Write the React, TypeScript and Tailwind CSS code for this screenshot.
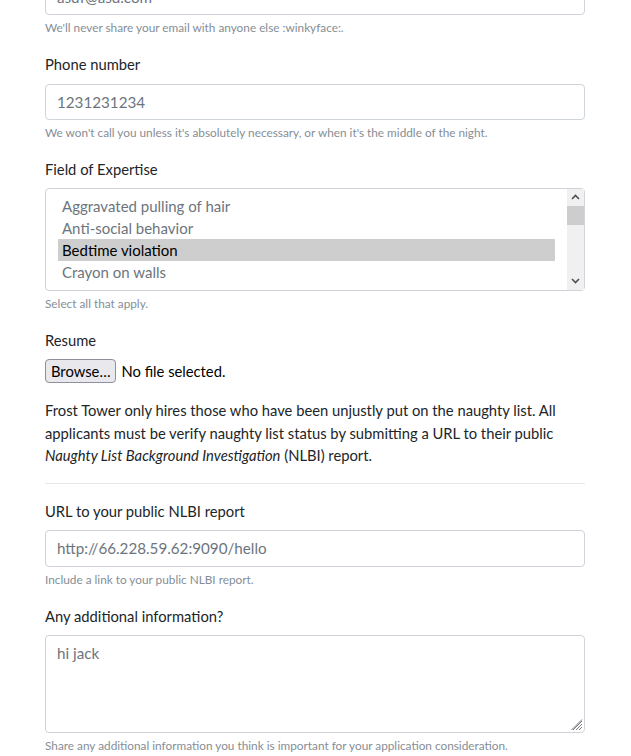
import React from "react";

function Label({ children }: { children: React.ReactNode }) {
    return <label className="block mb-2 text-[14.75px] leading-[22.5px] text-[#212529]">{children}</label>;
}

function Help({ children }: { children: React.ReactNode }) {
    return <small className="block mt-1 text-[11.8px] leading-[18px] text-[#868e96]">{children}</small>;
}

function TextInput({ value }: { value: string }) {
    return (
        <div className="h-[36.5px] border border-[#ced4da] rounded-[4px] px-[11px] py-[6px] text-[15.2px] leading-[22.5px] text-[#6c757d] bg-white">
            {value}
        </div>
    );
}

const options = [
    "Aggravated pulling of hair",
    "Anti-social behavior",
    "Bedtime violation",
    "Crayon on walls",
];

function Chevron({ up }: { up?: boolean }) {
    return (
        <svg width="9" height="6" viewBox="0 0 9 6" className={up ? "" : "rotate-180"}>
            <path d="M1 5 L4.5 1.5 L8 5" fill="none" stroke="#505050" strokeWidth="1.6" />
        </svg>
    );
}

export default function App() {
    return (
        <div className="w-[631px] h-[756px] overflow-hidden bg-white font-['Lato','Liberation_Sans',sans-serif]">
            <div className="ml-[45px] w-[540px] -mt-[21.5px]">
                <div className="mb-4">
                    <TextInput value="asdf@asd.com" />
                    <Help>We'll never share your email with anyone else :winkyface:.</Help>
                </div>

                <div className="mb-4">
                    <Label>Phone number</Label>
                    <TextInput value="1231231234" />
                    <Help>We won't call you unless it's absolutely necessary, or when it's the middle of the night.</Help>
                </div>

                <div className="mb-4">
                    <Label>Field of Expertise</Label>
                    <div className="relative h-[103px] -mt-[1px] border border-[#ced4da] rounded-[4px] bg-white flex">
                        <div className="flex-1 pl-[12px] pr-[12px] pt-[6px]">
                            {options.map((o, i) => (
                                <div
                                    key={o}
                                    className={
                                        "h-[22px] leading-[22px] px-[4px] text-[15px] " +
                                        (i === 2 ? "bg-[#cecece] text-black" : "text-[#6c757d]")
                                    }
                                >
                                    {o}
                                </div>
                            ))}
                        </div>
                        <div className="w-[17px] bg-[#f0f0f0] flex flex-col items-center">
                            <div className="h-[17px] flex items-center justify-center"><Chevron up /></div>
                            <div className="w-full h-[19px] bg-[#cdcdcd]" />
                            <div className="flex-1" />
                            <div className="h-[17px] flex items-center justify-center"><Chevron /></div>
                        </div>
                    </div>
                    <Help>Select all that apply.</Help>
                </div>

                <div className="mb-4">
                    <Label>Resume</Label>
                    <div className="flex items-center text-[14.75px]">
                        <span className="h-[24px] px-[5px] leading-[22px] border border-[#8f8f9d] rounded-[4px] bg-[#e9e9ed] text-black">
                            Browse…
                        </span>
                        <span className="ml-[5px] text-black">No file selected.</span>
                    </div>
                </div>

                <p className="text-[14.75px] leading-[22.5px] text-[#212529]">
                    Frost Tower only hires those who have been unjustly put on the naughty list. All applicants must be verify
                    naughty list status by submitting a URL to their public <em>Naughty List Background Investigation</em> (NLBI)
                    report.
                </p>
                <hr className="my-4 border-t border-[#e6e6e6]" />

                <div className="mb-4">
                    <Label>URL to your public NLBI report</Label>
                    <TextInput value="http://66.228.59.62:9090/hello" />
                    <Help>Include a link to your public NLBI report.</Help>
                </div>

                <div className="mb-4">
                    <Label>Any additional information?</Label>
                    <div className="relative h-[98px] border border-[#ced4da] rounded-[4px] px-[11px] py-[6px] text-[15.2px] leading-[22.5px] text-[#6c757d]">
                        hi jack
                        <svg width="12" height="12" viewBox="0 0 12 12" className="absolute right-[1px] bottom-[1px]">
                            <path d="M11 2 L2 11 M11 5 L5 11 M11 8 L8 11 M11 0.5 L0.5 11" stroke="#7a7a7a" strokeWidth="1" />
                        </svg>
                    </div>
                    <Help>Share any additional information you think is important for your application consideration.</Help>
                </div>
            </div>
        </div>
    );
}
